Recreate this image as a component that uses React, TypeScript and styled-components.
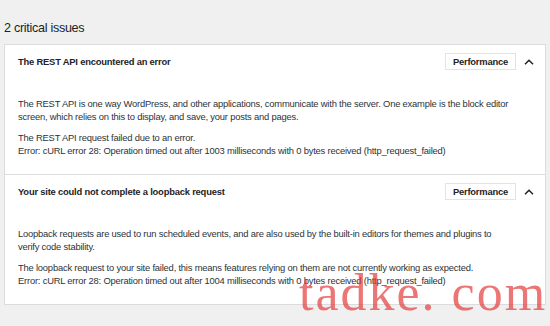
import React from "react";
import styled, { createGlobalStyle } from "styled-components";

const GlobalStyle = createGlobalStyle`
  html, body {
    margin: 0;
    padding: 0;
    background: #f0f0f1;
  }
  body {
    font-family: "Liberation Sans", Arial, sans-serif;
    color: #1d2327;
  }
`;

const Page = styled.div`
  position: relative;
  width: 550px;
  height: 326px;
  padding: 18px 4px 0 4px;
  box-sizing: border-box;
  overflow: hidden;
`;

const Heading = styled.h3`
  margin: 0 0 6px 0;
  font-size: 12.6px;
  font-weight: 400;
  letter-spacing: -0.3px;
  line-height: 20px;
  color: #1d2327;
`;

const Accordion = styled.div`
  width: 542px;
  background: #fff;
  border: 1px solid #dcdcde;
  box-sizing: border-box;
`;

const Section = styled.div`
  & + & {
    border-top: 1px solid #dcdcde;
  }
`;

const Header = styled.div`
  display: flex;
  align-items: center;
  height: 33px;
  padding: 0 11px 0 13px;
`;

const HeaderTitle = styled.div`
  flex: 1;
  font-size: 9.4px;
  font-weight: 700;
  letter-spacing: -0.2px;
  color: #1d2327;
`;

const Badge = styled.span`
  display: inline-flex;
  align-items: center;
  height: 15px;
  padding: 0 7px;
  border: 1px solid #d3e8f5;
  font-size: 9.4px;
  font-weight: 700;
  letter-spacing: -0.2px;
  color: #1d2327;
`;

const Toggle = styled.span`
  display: inline-flex;
  width: 10px;
  margin-left: 8px;
  justify-content: center;
`;

const Body = styled.div`
  padding: 19px 32px 17px 13px;
`;

const Para = styled.p`
  margin: 0;
  font-size: 9.4px;
  letter-spacing: -0.2px;
  line-height: 13px;
  color: #2c3338;
  & + & {
    margin-top: 8px;
  }
`;

const Watermark = styled.div`
  position: absolute;
  left: 299px;
  top: 263px;
  font-family: "Liberation Serif", "Times New Roman", serif;
  font-size: 52px;
  letter-spacing: 2px;
  color: rgba(228, 60, 60, 0.7);
  white-space: pre;
  pointer-events: none;
`;

const Chevron = () => (
  <svg width="10" height="6" viewBox="0 0 10 6">
    <path d="M1 5.2 L5 1.2 L9 5.2" fill="none" stroke="#1d2327" strokeWidth="1.5" />
  </svg>
);

const issues = [
  {
    title: "The REST API encountered an error",
    paras: [
      "The REST API is one way WordPress, and other applications, communicate with the server. One example is the block editor screen, which relies on this to display, and save, your posts and pages.",
      ["The REST API request failed due to an error.", "Error: cURL error 28: Operation timed out after 1003 milliseconds with 0 bytes received (http_request_failed)"],
    ],
  },
  {
    title: "Your site could not complete a loopback request",
    paras: [
      "Loopback requests are used to run scheduled events, and are also used by the built-in editors for themes and plugins to verify code stability.",
      ["The loopback request to your site failed, this means features relying on them are not currently working as expected.", "Error: cURL error 28: Operation timed out after 1004 milliseconds with 0 bytes received (http_request_failed)"],
    ],
  },
];

export default function App() {
  return (
    <>
      <GlobalStyle />
      <Page>
        <Heading>2 critical issues</Heading>
        <Accordion>
          {issues.map((issue) => (
            <Section key={issue.title}>
              <Header>
                <HeaderTitle>{issue.title}</HeaderTitle>
                <Badge>Performance</Badge>
                <Toggle>
                  <Chevron />
                </Toggle>
              </Header>
              <Body>
                {issue.paras.map((p, i) => (
                  <Para key={i}>
                    {Array.isArray(p) ? (
                      <>
                        {p[0]}
                        <br />
                        {p[1]}
                      </>
                    ) : (
                      p
                    )}
                  </Para>
                ))}
              </Body>
            </Section>
          ))}
        </Accordion>
        <Watermark>{"tadke. com"}</Watermark>
      </Page>
    </>
  );
}
